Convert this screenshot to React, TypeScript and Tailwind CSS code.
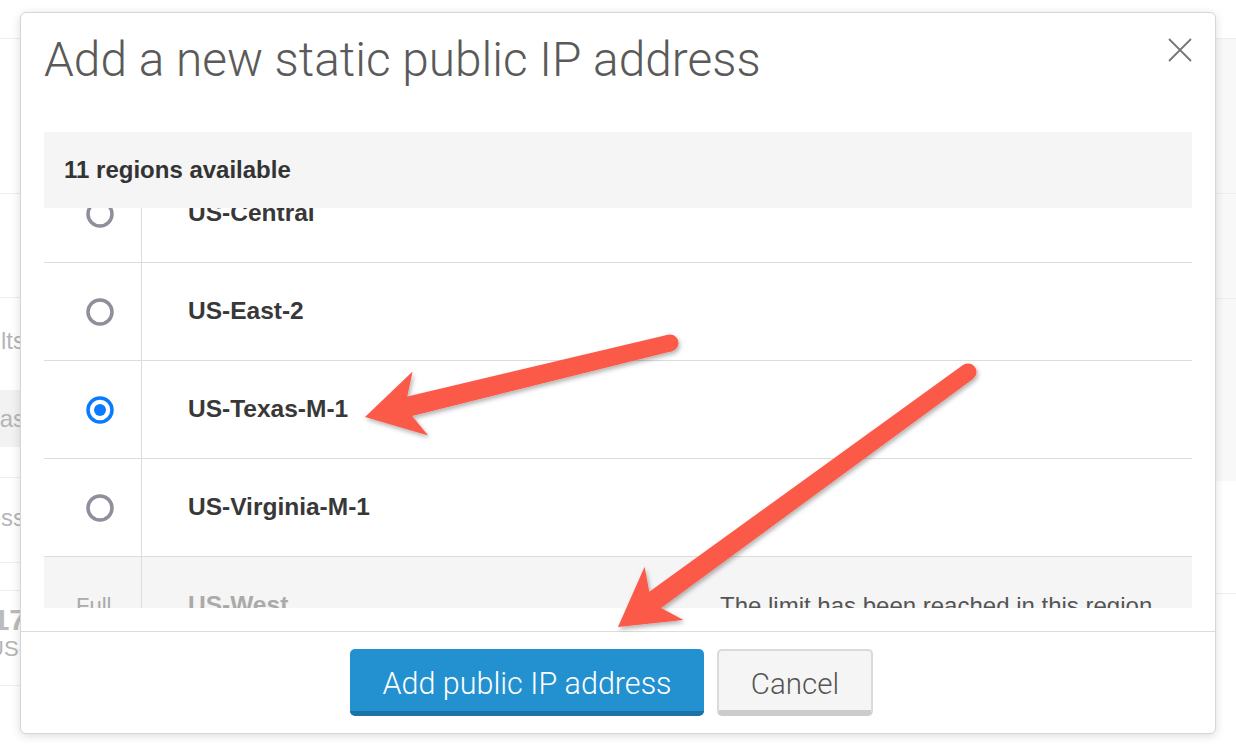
import React from 'react'

type Pt = [number, number]

// builds an annotation arrow polygon from tip to tail
function arrowPoints(tip: Pt, tail: Pt) {
  const dx = tail[0] - tip[0]
  const dy = tail[1] - tip[1]
  const len = Math.hypot(dx, dy)
  const ux = dx / len
  const uy = dy / len
  const nx = -uy
  const ny = ux
  const p = (a: number, b: number) => `${(tip[0] + ux * a + nx * b).toFixed(1)},${(tip[1] + uy * a + ny * b).toFixed(1)}`
  return [p(0, 0), p(57, -33), p(46, -10), p(len, -8.5), p(len, 8.5), p(46, 10), p(57, 33)].join(' ')
}

const regions = [
  { name: 'US-Central' },
  { name: 'US-East-2' },
  { name: 'US-Texas-M-1', selected: true },
  { name: 'US-Virginia-M-1' },
  { name: 'US-West', full: true, note: 'The limit has been reached in this region' },
]

function Radio({ checked }: { checked?: boolean }) {
  return (
    <svg width="28" height="28" viewBox="0 0 28 28">
      <circle cx="14" cy="14" r="12" fill="white" stroke={checked ? '#0a7bff' : '#8f8e9a'} strokeWidth="3.5" />
      {checked && <circle cx="14" cy="14" r="6" fill="#0a7bff" />}
    </svg>
  )
}

function Background() {
  return (
    <div className="flex h-[752px] w-full">
      <div className="flex w-[600px] flex-col">
        <div className="h-[39px] border-b border-[#eeeeee]" />
        <div className="h-[155px] border-b border-[#eeeeee]" />
        <div className="h-[104px] border-b border-[#eeeeee]" />
        <div className="flex h-[180px] flex-col border-b border-[#eeeeee]">
          <div className="flex h-[92px] w-[25px] items-center justify-end overflow-hidden pb-[6px] text-[24px] whitespace-nowrap text-[#b5b5b5]">Results</div>
          <div className="flex h-[57px] w-[25px] items-center justify-end overflow-hidden bg-[#f2f2f2] text-[24px] whitespace-nowrap text-[#b5b5b5]">Texas</div>
        </div>
        <div className="flex h-[85px] w-[25px] items-start justify-end overflow-hidden border-b border-[#eeeeee] pt-[22px] text-[24px] whitespace-nowrap text-[#b5b5b5]">Address</div>
        <div className="h-[28px] border-b border-[#eeeeee]" />
        <div className="flex h-[95px] flex-col border-b border-[#eeeeee] pt-[14px]">
          <div className="flex w-[26px] justify-end overflow-hidden text-[30px] leading-[30px] font-bold whitespace-nowrap text-[#bbbbbb]">17</div>
          <div className="flex w-[26px] justify-end overflow-hidden text-[22px] leading-[28px] whitespace-nowrap text-[#b5b5b5]">US-</div>
        </div>
      </div>
      <div className="flex flex-1 flex-col">
        <div className="h-[39px] border-b border-[#eeeeee]" />
        <div className="h-[155px] border-b border-[#eeeeee] bg-[#f8f8f8]" />
        <div className="h-[105px] border-b border-[#eeeeee] bg-[#f8f8f8]" />
        <div className="h-[182px] bg-[#f8f8f8]" />
        <div className="h-[113px] border-b border-[#eeeeee]" />
      </div>
    </div>
  )
}

export default function App() {
  return (
    <div className="relative h-[752px] w-[1236px] overflow-hidden bg-white font-['Liberation_Sans',Arial,sans-serif]">
      <Background />

      <div className="absolute top-[12px] left-[20px] flex h-[722px] w-[1196px] flex-col rounded-[6px] border border-[#d6d6d6] bg-white shadow-[0_2px_10px_rgba(0,0,0,0.14)]">
        <div className="flex h-[71px] items-start justify-between pt-[24px] pr-[23px] pl-[23px]">
          <h1 className="font-['Roboto',sans-serif] text-[47.8px] leading-none font-light text-[#5a5a5a]">
            Add a new static public IP address
          </h1>
          <button className="mt-[1px] text-[#777777]">
            <svg width="24" height="24" viewBox="0 0 24 24">
              <path d="M1 1 L23 23 M23 1 L1 23" stroke="currentColor" strokeWidth="1.8" fill="none" />
            </svg>
          </button>
        </div>

        <div className="mt-[48px] px-[23px]">
          <div className="flex h-[76px] items-center bg-[#f5f5f5] pl-[20px] text-[24px] font-bold text-[#333333]">
            11 regions available
          </div>
          <div className="h-[400px] overflow-hidden">
            <div className="-mt-[43px]">
              {regions.map((r) => (
                <div
                  key={r.name}
                  className={`grid h-[98px] grid-cols-[98px_578px_1fr] border-b border-[#dcdcdc] ${r.full ? 'bg-[#f5f5f5]' : ''}`}
                >
                  {r.full ? (
                    <div className="flex items-center border-r border-[#dcdcdc] pl-[32px] text-[22px] text-[#aaaaaa]">Full</div>
                  ) : (
                    <div className="flex items-center border-r border-[#dcdcdc] pl-[42px]">
                      <Radio checked={r.selected} />
                    </div>
                  )}
                  <div className={`flex items-center pl-[46px] text-[24.5px] font-bold ${r.full ? 'text-[#aaaaaa]' : 'text-[#383838]'}`}>
                    {r.name}
                  </div>
                  <div className="flex items-center text-[24px] text-[#555555]">{r.note}</div>
                </div>
              ))}
            </div>
          </div>
        </div>

        <div className="mt-[23px] flex justify-center gap-[13px] border-t border-[#dcdcdc] pt-[17px] pr-[13px]">
          <button className="h-[67px] w-[354px] rounded-[5px] border-b-[5px] border-[#1b72a7] bg-[#2391d0] pt-[9px] font-['Roboto',sans-serif] text-[30.5px] leading-none font-light text-white">
            Add public IP address
          </button>
          <button className="h-[67px] w-[156px] rounded-[5px] border-2 border-b-[6px] border-[#dadada] border-b-[#cccccc] bg-[#f5f5f5] pt-[8px] font-['Roboto',sans-serif] text-[29.5px] leading-none font-light text-[#555555]">
            Cancel
          </button>
        </div>
      </div>

      <svg className="pointer-events-none absolute inset-0" width="1236" height="752">
        <defs>
          <filter id="arrowShadow" x="-20%" y="-20%" width="140%" height="140%">
            <feDropShadow dx="1.5" dy="2.5" stdDeviation="2" floodColor="#000" floodOpacity="0.3" />
          </filter>
        </defs>
        <g fill="#fb5a4a" filter="url(#arrowShadow)">
          <polygon points={arrowPoints([365, 417], [670, 343])} />
          <circle cx="670" cy="343" r="8.5" />
          <polygon points={arrowPoints([618, 627], [968, 372])} />
          <circle cx="968" cy="372" r="8.5" />
        </g>
      </svg>
    </div>
  )
}
